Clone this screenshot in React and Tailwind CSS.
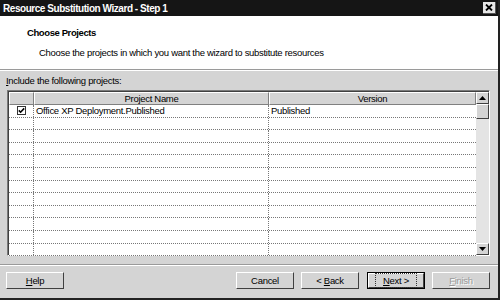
import React from 'react'

const rows = Array.from({ length: 12 })

function Btn({ children, className = '', focused = false, disabled = false }) {
  return (
    <div
      className={
        'w-[58px] h-[17px] ' +
        (focused ? 'border border-black ' : '') +
        className
      }
    >
      <div className="w-full h-full border-t border-l border-t-white border-l-white border-r border-b border-r-[#404040] border-b-[#404040] bg-[#d4d4d4] flex items-center justify-center">
        <div
          className={
            'px-[6px] leading-[11px] ' +
            (focused ? 'outline outline-1 outline-dotted outline-[#333] outline-offset-[1px] ' : '') +
            (disabled ? 'text-[#9a9a9a] [text-shadow:1px_1px_0_#fff]' : 'text-black')
          }
        >
          {children}
        </div>
      </div>
    </div>
  )
}

export default function App() {
  return (
    <div className="w-[500px] h-[300px] bg-[#d4d4d4] flex flex-col border-r-2 border-b-2 border-[#222] text-[9.5px] tracking-[-0.3px] text-black font-['Liberation_Sans',Arial,sans-serif] overflow-hidden">
      {/* Title bar */}
      <div className="h-[16px] bg-[#151515] flex items-center justify-between pl-[3px] pr-[2px]">
        <span className="text-white font-bold text-[10px] tracking-[-0.45px]">Resource Substitution Wizard - Step 1</span>
        <div className="w-[13px] h-[12px] bg-[#e6e6e6] border-r border-b border-[#555] flex items-center justify-center">
          <svg width="8" height="7" viewBox="0 0 8 7">
            <path d="M1 0.5 L7 6.5 M7 0.5 L1 6.5" stroke="#000" strokeWidth="1.8" />
          </svg>
        </div>
      </div>

      {/* Header */}
      <div className="h-[54px] bg-white border-b border-[#9a9a9a] pl-[27px] pt-[10px]">
        <p className="font-bold text-[9.5px] tracking-[-0.4px] leading-[13px]">Choose Projects</p>
        <p className="pl-[12px] mt-[7px] leading-[13px]">
          Choose the projects in which you want the wizard to substitute resources
        </p>
      </div>
      <div className="h-px bg-white" />

      {/* Body */}
      <div className="flex-1 flex flex-col px-[7px] pt-[3px]">
        <p className="leading-[13px] -ml-px">
          <span className="underline">I</span>nclude the following projects:
        </p>

        <div className="mt-[3px] w-[483px] h-[166px] border-t border-l border-[#7a7a7a] border-r border-b border-r-white border-b-white flex">
          <div className="flex-1 bg-white flex flex-col border-t border-l border-[#404040]">
            {/* header row */}
            <div className="h-[13px] flex bg-[#d4d4d4] shrink-0">
              <div className="w-[25px] border-t border-l border-white border-r border-b border-r-[#808080] border-b-[#808080]" />
              <div className="w-[235px] border-t border-l border-white border-r border-b border-r-[#808080] border-b-[#808080] flex items-center justify-center leading-[11px]">
                Project Name
              </div>
              <div className="flex-1 border-t border-l border-white border-r border-b border-r-[#808080] border-b-[#808080] flex items-center justify-center leading-[11px]">
                Version
              </div>
            </div>
            {rows.map((_, i) => (
              <div key={i} className="h-[12.6px] flex border-b border-dotted border-[#777] shrink-0">
                <div className="w-[25px] border-r border-dotted border-[#777] flex items-center justify-center">
                  {i === 0 && (
                    <div className="w-[9px] h-[9px] border border-[#333] bg-white flex items-center justify-center">
                      <svg width="7" height="7" viewBox="0 0 7 7">
                        <path d="M0.8 3.4 L2.6 5.2 L6.2 1.4" stroke="#000" strokeWidth="1.6" fill="none" />
                      </svg>
                    </div>
                  )}
                </div>
                <div className="w-[235px] border-r border-dotted border-[#777] pl-[2px] leading-[12px]">
                  {i === 0 ? 'Office XP Deployment.Published' : ''}
                </div>
                <div className="flex-1 pl-[2px] leading-[12px]">{i === 0 ? 'Published' : ''}</div>
              </div>
            ))}
          </div>

          {/* Scrollbar */}
          <div className="w-[13px] flex flex-col bg-[#e4e4e4] border-t border-[#404040]">
            <div className="h-[12px] bg-[#d4d4d4] border-t border-l border-white border-r border-b border-r-[#404040] border-b-[#404040] flex items-center justify-center">
              <svg width="7" height="4" viewBox="0 0 7 4"><path d="M3.5 0 L7 4 L0 4 Z" fill="#000" /></svg>
            </div>
            <div className="h-[15px] bg-[#d4d4d4] border-t border-l border-white border-r border-b border-r-[#404040] border-b-[#404040]" />
            <div className="flex-1" />
            <div className="h-[12px] bg-[#d4d4d4] border-t border-l border-white border-r border-b border-r-[#404040] border-b-[#404040] flex items-center justify-center">
              <svg width="7" height="4" viewBox="0 0 7 4"><path d="M0 0 L7 0 L3.5 4 Z" fill="#000" /></svg>
            </div>
          </div>
        </div>

        <div className="mt-[8px] -mx-[7px] border-t border-[#9a9a9a]" />
        <div className="-mx-[7px] h-px bg-white" />

        {/* Buttons */}
        <div className="mt-[6px] flex items-center -ml-px">
          <Btn>
            <span className="underline">H</span>elp
          </Btn>
          <div className="flex-1" />
          <Btn>Cancel</Btn>
          <Btn className="ml-[7px]">
            &lt; <span className="underline">B</span>ack
          </Btn>
          <Btn className="ml-[8px]" focused>
            <span className="underline">N</span>ext &gt;
          </Btn>
          <Btn className="ml-[7px] mr-[1px]" disabled>
            <span className="underline">F</span>inish
          </Btn>
        </div>
      </div>
    </div>
  )
}
